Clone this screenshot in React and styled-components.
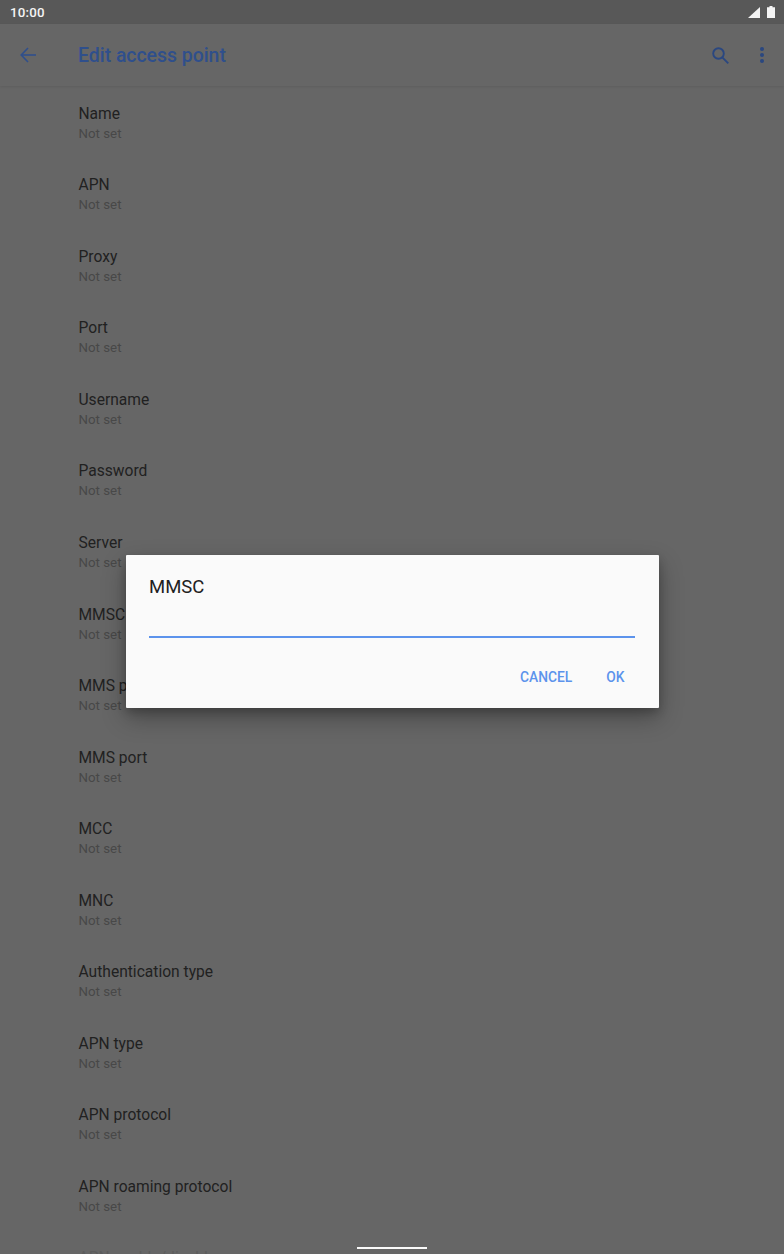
import React from "react";
import styled, { createGlobalStyle } from "styled-components";

const GlobalStyle = createGlobalStyle`
  html, body {
    margin: 0;
    padding: 0;
    background: #666666;
    font-family: Roboto, "Liberation Sans", sans-serif;
  }
`;

const Screen = styled.div`
  position: relative;
  width: 784px;
  height: 1254px;
  overflow: hidden;
  background: #666666;
`;

const StatusBar = styled.div`
  height: 24px;
  padding: 0 10px;
  display: flex;
  align-items: center;
  justify-content: space-between;
  background: #585858;
  color: #f4f4f4;
  font-size: 13.3px;
  font-weight: 500;
  letter-spacing: 0.2px;
`;

const StatusIcons = styled.div`
  display: flex;
  align-items: center;
  gap: 7px;
  margin-right: -1px;
`;

const TopBar = styled.header`
  height: 62px;
  display: flex;
  align-items: center;
  background: #666666;
  box-shadow: 0 1px 2px rgba(0, 0, 0, 0.08);
`;

const BackButton = styled.div`
  width: 78px;
  padding-left: 19.5px;
  box-sizing: border-box;
  display: flex;
  align-items: center;
  color: #2f4f8c;
`;

const Title = styled.h1`
  flex: 1;
  margin: 0;
  padding-top: 2px;
  color: #2f4f8c;
  font-size: 19.4px;
  font-weight: 500;
  line-height: 24px;
`;

const Actions = styled.div`
  display: flex;
  align-items: center;
  gap: 31px;
  padding-right: 20px;
  color: #2a4780;
`;

const List = styled.div`
  padding-top: 17.9px;
`;

const Row = styled.div`
  height: 71.53px;
  padding-left: 78.5px;
  box-sizing: border-box;
`;

const RowTitle = styled.div`
  color: ${(p) => (p.$faded ? "#5c5c5c" : "#212121")};
  font-size: 15.6px;
  line-height: 21px;
`;

const RowValue = styled.div`
  color: #484848;
  font-size: 13.3px;
  line-height: 18.5px;
`;

const Dialog = styled.div`
  position: absolute;
  left: 125.5px;
  top: 554.5px;
  width: 533px;
  height: 153px;
  box-sizing: border-box;
  padding: 22.5px 24px 0 23.5px;
  background: #fafafa;
  border-radius: 1px;
  box-shadow: 0 10px 24px rgba(0, 0, 0, 0.3), 0 4px 10px rgba(0, 0, 0, 0.2);
`;

const DialogTitle = styled.h2`
  margin: 0;
  color: #212121;
  font-size: 18.5px;
  font-weight: 400;
  line-height: 20px;
`;

const Field = styled.div`
  margin-top: 39px;
  height: 2px;
  background: #5c93ec;
`;

const DialogActions = styled.div`
  display: flex;
  justify-content: flex-end;
  gap: 34px;
  margin-top: 30px;
  padding-right: 10px;
`;

const TextButton = styled.div`
  color: #5c93ec;
  font-size: 13.8px;
  font-weight: 500;
  line-height: 18px;
`;

const NavHandle = styled.div`
  position: absolute;
  left: 357px;
  bottom: 5px;
  width: 70px;
  height: 2px;
  background: #fafafa;
`;

const rows = [
  "Name",
  "APN",
  "Proxy",
  "Port",
  "Username",
  "Password",
  "Server",
  "MMSC",
  "MMS proxy",
  "MMS port",
  "MCC",
  "MNC",
  "Authentication type",
  "APN type",
  "APN protocol",
  "APN roaming protocol",
];

function App() {
  return (
    <Screen>
      <GlobalStyle />
      <StatusBar>
        <span>10:00</span>
        <StatusIcons>
          <svg width="12" height="11" viewBox="0 0 12 11">
            <path d="M0 11 L12 0 V11 Z" fill="#f4f4f4" />
          </svg>
          <svg width="8" height="12" viewBox="0 0 8 12">
            <path d="M2.5 0 H5.5 V1.2 H8 V12 H0 V1.2 H2.5 Z" fill="#f4f4f4" />
          </svg>
        </StatusIcons>
      </StatusBar>
      <TopBar>
        <BackButton>
          <svg width="16" height="16" viewBox="0 0 16 16" fill="none" stroke="currentColor" strokeWidth="1.6">
            <path d="M16 8 H1.5" />
            <path d="M8 1 L1.2 8 L8 15" />
          </svg>
        </BackButton>
        <Title>Edit access point</Title>
        <Actions>
          <svg width="17" height="17" viewBox="0 0 17 17" fill="none" stroke="currentColor" strokeWidth="1.9">
            <circle cx="6.5" cy="6.5" r="5.3" />
            <path d="M10.3 10.3 L16.3 16.3" />
          </svg>
          <svg width="4" height="16" viewBox="0 0 4 16" fill="currentColor">
            <circle cx="2" cy="2" r="2" />
            <circle cx="2" cy="8" r="2" />
            <circle cx="2" cy="14" r="2" />
          </svg>
        </Actions>
      </TopBar>
      <List>
        {rows.map((name) => (
          <Row key={name}>
            <RowTitle>{name}</RowTitle>
            <RowValue>Not set</RowValue>
          </Row>
        ))}
        <Row>
          <RowTitle $faded>APN enable/disable</RowTitle>
        </Row>
      </List>
      <Dialog>
        <DialogTitle>MMSC</DialogTitle>
        <Field />
        <DialogActions>
          <TextButton>CANCEL</TextButton>
          <TextButton>OK</TextButton>
        </DialogActions>
      </Dialog>
      <NavHandle />
    </Screen>
  );
}

export default App;
